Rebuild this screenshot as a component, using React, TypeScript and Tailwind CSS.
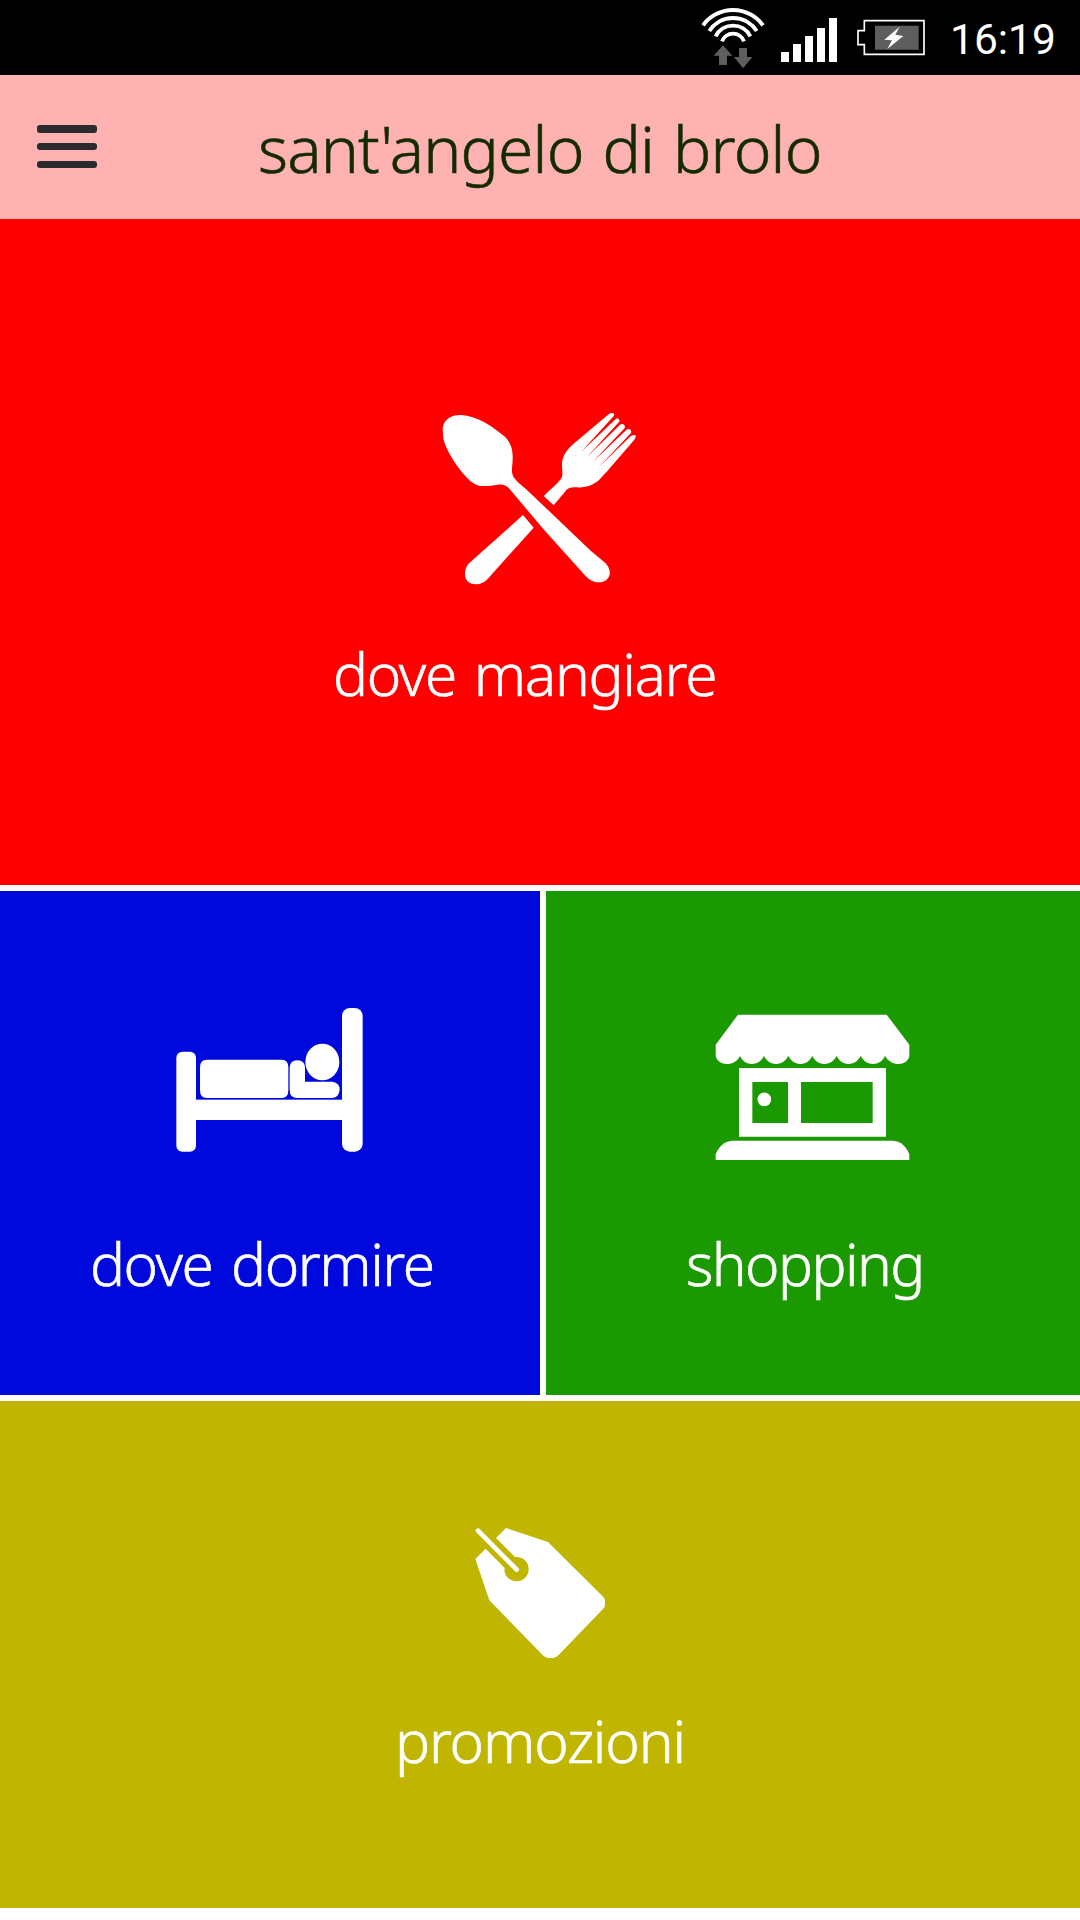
import type { ReactNode } from "react";

const labelFont = "font-['Noto_Sans',sans-serif] font-light whitespace-nowrap [-webkit-text-stroke:0.6px_currentColor]";

function StatusBar() {
  return (
    <div className="flex h-[75px] shrink-0 bg-black">
      <svg className="ml-[690px] h-[75px] w-[250px] shrink-0" viewBox="0 0 750 225" fill="none">
        <g stroke="#fff" strokeWidth="11.5">
          <path d="M39 76 A111 111 0 0 1 219 76" />
          <path d="M58 93 A84 84 0 0 1 200 93" />
          <path d="M77 109 A58 58 0 0 1 181 109" />
          <path d="M96 124 A35 35 0 0 1 162 124" />
        </g>
        <g fill="#5e5e5e">
          <path d="M99 136 L127 167 H111 V195 H87 V167 H71 Z" />
          <path d="M147 144 H171 V171 H187 L159 205 L132 171 H147 Z" />
        </g>
        <g fill="#fff">
          <path d="M273 156h24v30h-24z M309 132h24v54h-24z M345 108h24v78h-24z M381 84h24v102h-24z M417 54h24v132h-24z" />
        </g>
        <path d="M523 62 H702 V163 H523 V134 H504 V92 H523 Z" stroke="#fff" strokeWidth="5" />
        <path d="M555 77h131v72H555z" fill="#5e5e5e" />
        <path d="M629 80 L583 119 L606 121 L592 147 L640 108 L616 104 Z" fill="#fff" />
      </svg>
      <span className="ml-[10px] font-['Roboto',sans-serif] text-[42.5px] leading-[80px] text-white">16:19</span>
    </div>
  );
}

function Header() {
  return (
    <header className="flex h-[144px] shrink-0 bg-[#ffb2b2]">
      <button aria-label="Menu" className="mt-[50px] ml-[37px] flex h-[43px] w-[60px] shrink-0 flex-col justify-between">
        <span className="h-[7.5px] w-full rounded-[3px] bg-[#2b2b2e]" />
        <span className="h-[7.5px] w-full rounded-[3px] bg-[#2b2b2e]" />
        <span className="h-[7.5px] w-full rounded-[3px] bg-[#2b2b2e]" />
      </button>
      <h1 className={`mt-[34px] ml-[161px] text-[64px] leading-[80px] tracking-[-0.8px] [word-spacing:3px] text-[#142b00] ${labelFont}`}>sant'angelo di brolo</h1>
    </header>
  );
}

function Tile({ className, labelClass, label, children }: { className: string; labelClass: string; label: string; children: ReactNode }) {
  return (
    <section className={`flex flex-col items-start ${className}`}>
      {children}
      <span className={`text-[58.5px] leading-[80px] text-white ${labelFont} ${labelClass}`}>{label}</span>
    </section>
  );
}

function CutleryIcon() {
  return (
    <svg className="mt-[181px] ml-[430px] h-[200px] w-[220px]" viewBox="0 0 660 600" fill="#fff">
      <path d="M38 88 C40 58 62 45 92 45 C145 48 190 82 222 108 C242 126 249 148 248 176 C248 198 242 215 250 230 C262 248 278 257 290 269 L482 452 L527 490 C552 518 536 546 508 547 C490 547 476 538 466 527 L340 387 L237 265 C229 256 218 252 203 254 C184 257 166 260 148 257 C126 252 112 234 97 218 C75 190 48 150 40 116 Z" />
      <path d="M279 345 L311 383 L179 530 C160 556 128 559 112 543 C101 530 103 507 115 492 L134 475 Z" />
      <path d="M341 288 L371 316 L405 275 C412 264 424 261 438 262 C470 264 498 254 518 228 Q532 214 543 200 L608 125 Q619 113 617 106 Q608 102 600 110 L504 204 L603 99 Q606 91 598 87 Q592 86 588 91 L488 186 L585 83 Q586 76 579 72 Q574 71 570 74 L471 171 L569 64 Q568 57 562 54 L551 63 L453 156 L552 47 Q555 41 549 39 Q542 38 536 43 L430 132 C407 152 396 172 396 194 C396 212 400 224 394 235 C384 250 360 270 341 288 Z" />
    </svg>
  );
}

function BedIcon() {
  return (
    <svg className="mt-[99px] ml-[160px] h-[180px] w-[220px]" viewBox="0 0 660 540" fill="#fff">
      <rect x="49" y="185" width="59" height="300" rx="18" />
      <rect x="546" y="54" width="62" height="431" rx="24" />
      <rect x="100" y="329" width="456" height="61" />
      <path d="M140 209 H365 Q385 209 385 232 V300 Q385 324 365 324 H140 Q120 324 120 300 V232 Q120 209 140 209 Z" />
      <path d="M389 235 Q389 211 412 211 Q435 211 435 235 V275 H517 Q539 278 539 299 Q537 323 515 324 H412 Q389 324 389 300 Z" />
      <ellipse cx="487" cy="216" rx="51" ry="55" />
    </svg>
  );
}

function ShopIcon() {
  return (
    <svg className="mt-[109px] ml-[154px] h-[180px] w-[220px]" viewBox="0 0 660 540" fill="#fff">
      <path d="M114 44 H560 L628 134 V168 C622 200 572 200 555 167 C542 200 497 200 482 167 C467 200 424 200 410 167 C395 200 351 200 337 167 C323 200 280 200 265 167 C250 200 206 200 192 167 C178 200 133 200 120 167 C106 200 54 200 47 168 V134 Z" />
      <path fillRule="evenodd" d="M117 204 H558 V410 H117 Z M157 246 V369 H264 V246 Z M303 246 V369 H518 V246 Z" />
      <circle cx="193" cy="298" r="20.5" />
      <path d="M47 480 V463 C55 440 73 424 97 422 H579 C603 424 620 440 628 463 V480 Z" />
    </svg>
  );
}

function TagIcon() {
  return (
    <svg className="mt-[109px] ml-[460px] h-[160px] w-[160px]" viewBox="0 0 480 480" fill="#fff">
      <path d="M138 54 L264 96 L430 261 Q436 267 435 275 V284 Q435 291 429 297 L296 435 Q288 443 279 444 H265 Q257 443 250 437 L88 271 L46 147 L77 116 L134 174 C130 197 148 214 170 214 C190 214 206 198 206 177 C206 155 189 139 165 141 L108 84 Z" />
      <path d="M54 62 L170 179" stroke="#fff" strokeWidth="14" strokeLinecap="round" />
    </svg>
  );
}

export default function App() {
  return (
    <main className="flex h-[1920px] w-[1080px] flex-col overflow-hidden bg-white">
      <StatusBar />
      <Header />
      <Tile className="h-[666px] bg-[#ff0000]" label="dove mangiare" labelClass="mt-[33px] ml-[333px] tracking-[-1.3px] [word-spacing:4px]">
        <CutleryIcon />
      </Tile>
      <div className="mt-[6px] flex gap-[6px]">
        <Tile className="h-[504px] w-[540px] bg-[#0009db]" label="dove dormire" labelClass="mt-[53px] ml-[90px] tracking-[-1.45px] [word-spacing:5px]">
          <BedIcon />
        </Tile>
        <Tile className="h-[504px] w-[534px] bg-[#1b9900]" label="shopping" labelClass="mt-[43px] ml-[140px] tracking-[-1.6px]">
          <ShopIcon />
        </Tile>
      </div>
      <Tile className="mt-[6px] h-[507px] bg-[#c0b500]" label="promozioni" labelClass="mt-[30px] ml-[395px] tracking-[-1.15px]">
        <TagIcon />
      </Tile>
    </main>
  );
}
